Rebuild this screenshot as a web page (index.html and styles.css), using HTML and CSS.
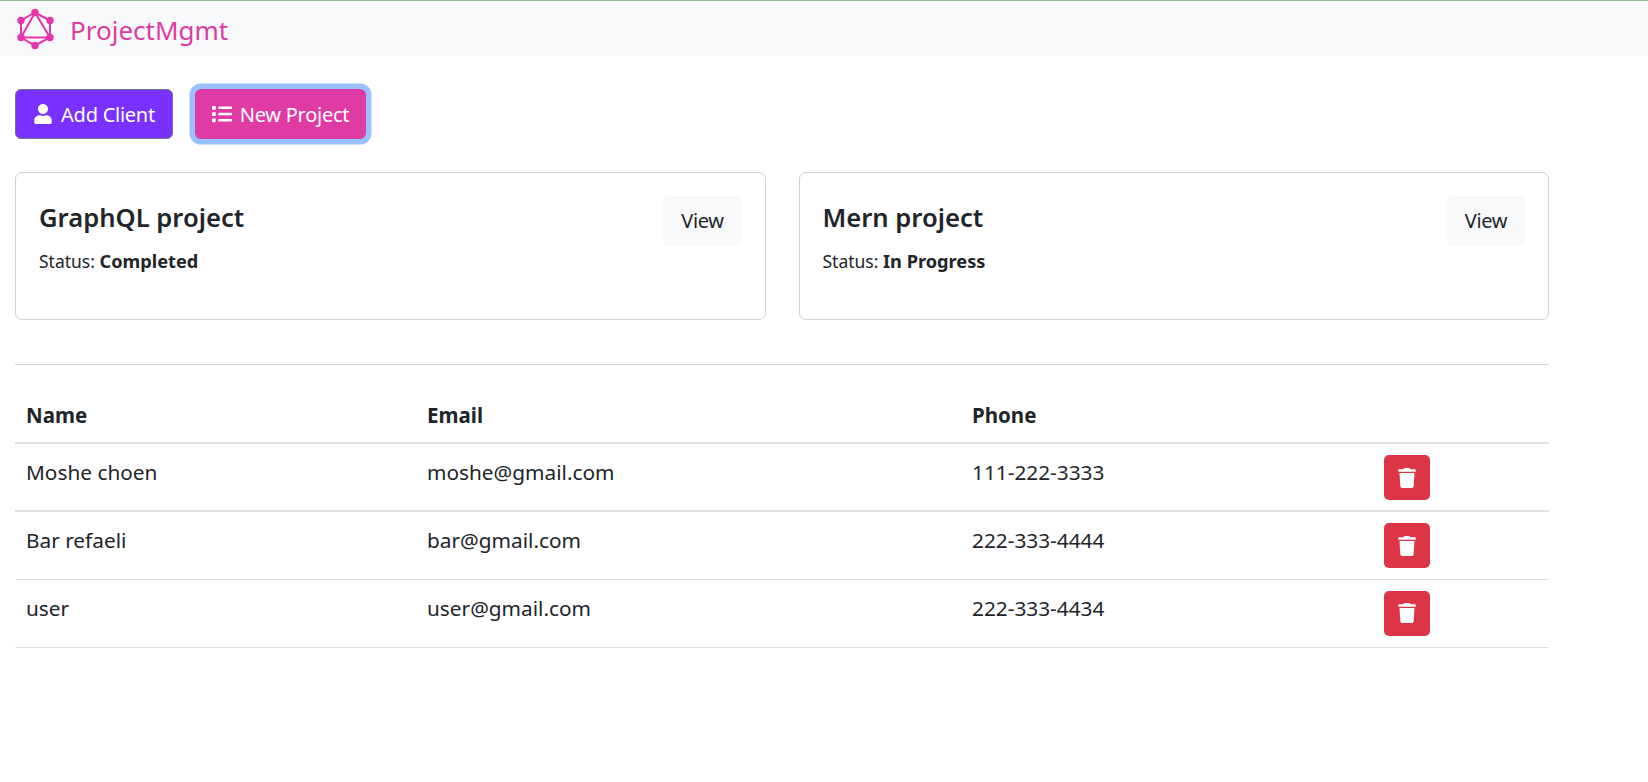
FILE: index.html
```html
<!doctype html>
<html lang="en">
  <head>
    <meta charset="UTF-8" />
    <title>ProjectMgmt</title>
    <link rel="stylesheet" href="styles.css">
  </head>
  <body>
    <nav class="navbar">
      <svg class="logo" viewBox="0 0 44 48">
        <g stroke="#e535ab" stroke-width="2" fill="none">
          <polygon points="22,7.5 37,15.5 37,32.5 22,40.5 8,32.5 8,15.5" />
          <polygon points="22,7.5 37,32.5 8,32.5" />
        </g>
        <g fill="#e535ab">
          <circle cx="22" cy="7.5" r="3.7" />
          <circle cx="37" cy="15.5" r="3.7" />
          <circle cx="37" cy="32.5" r="3.7" />
          <circle cx="22" cy="40.5" r="3.7" />
          <circle cx="8" cy="32.5" r="3.7" />
          <circle cx="8" cy="15.5" r="3.7" />
        </g>
      </svg>
      <span class="brand">ProjectMgmt</span>
    </nav>

    <main class="container">
      <div class="actions">
        <button class="btn btn-client">
          <svg class="icon" viewBox="0 0 448 512"><path d="M224 256c70.7 0 128-57.3 128-128S294.7 0 224 0 96 57.3 96 128s57.3 128 128 128zm89.6 32h-16.7c-22.2 10.2-46.9 16-72.9 16s-50.6-5.8-72.9-16h-16.7C60.2 288 0 348.2 0 422.4V464c0 26.5 21.5 48 48 48h352c26.5 0 48-21.5 48-48v-41.6c0-74.2-60.2-134.4-134.4-134.4z" /></svg>
          Add Client
        </button>
        <button class="btn btn-project">
          <svg class="icon" viewBox="0 0 512 512"><path d="M80 368H16a16 16 0 0 0-16 16v64a16 16 0 0 0 16 16h64a16 16 0 0 0 16-16v-64a16 16 0 0 0-16-16zm0-320H16A16 16 0 0 0 0 64v64a16 16 0 0 0 16 16h64a16 16 0 0 0 16-16V64a16 16 0 0 0-16-16zm0 160H16a16 16 0 0 0-16 16v64a16 16 0 0 0 16 16h64a16 16 0 0 0 16-16v-64a16 16 0 0 0-16-16zm416 176H176a16 16 0 0 0-16 16v32a16 16 0 0 0 16 16h320a16 16 0 0 0 16-16v-32a16 16 0 0 0-16-16zm0-320H176a16 16 0 0 0-16 16v32a16 16 0 0 0 16 16h320a16 16 0 0 0 16-16V80a16 16 0 0 0-16-16zm0 160H176a16 16 0 0 0-16 16v32a16 16 0 0 0 16 16h320a16 16 0 0 0 16-16v-32a16 16 0 0 0-16-16z" /></svg>
          New Project
        </button>
      </div>

      <div class="projects">
        <div class="card">
          <div class="card-head">
            <h5 class="card-title">GraphQL project</h5>
            <a class="btn-view">View</a>
          </div>
          <p class="status">Status: <strong>Completed</strong></p>
        </div>
        <div class="card">
          <div class="card-head">
            <h5 class="card-title">Mern project</h5>
            <a class="btn-view">View</a>
          </div>
          <p class="status">Status: <strong>In Progress</strong></p>
        </div>
      </div>

      <hr class="divider" />

      <table class="clients">
        <thead>
          <tr>
            <th class="col-name">Name</th>
            <th class="col-email">Email</th>
            <th class="col-phone">Phone</th>
            <th></th>
          </tr>
        </thead>
        <tbody>
          <tr>
            <td>Moshe choen</td>
            <td>moshe@gmail.com</td>
            <td>111-222-3333</td>
            <td><button class="btn-delete"><svg class="icon" viewBox="0 0 448 512"><path d="M432 32H312l-9.4-18.7A24 24 0 0 0 281.1 0H166.8a23.72 23.72 0 0 0-21.4 13.3L136 32H16A16 16 0 0 0 0 48v32a16 16 0 0 0 16 16h416a16 16 0 0 0 16-16V48a16 16 0 0 0-16-16zM53.2 467a48 48 0 0 0 47.9 45h245.8a48 48 0 0 0 47.9-45L416 128H32z" /></svg></button></td>
          </tr>
          <tr>
            <td>Bar refaeli</td>
            <td>bar@gmail.com</td>
            <td>222-333-4444</td>
            <td><button class="btn-delete"><svg class="icon" viewBox="0 0 448 512"><path d="M432 32H312l-9.4-18.7A24 24 0 0 0 281.1 0H166.8a23.72 23.72 0 0 0-21.4 13.3L136 32H16A16 16 0 0 0 0 48v32a16 16 0 0 0 16 16h416a16 16 0 0 0 16-16V48a16 16 0 0 0-16-16zM53.2 467a48 48 0 0 0 47.9 45h245.8a48 48 0 0 0 47.9-45L416 128H32z" /></svg></button></td>
          </tr>
          <tr>
            <td>user</td>
            <td>user@gmail.com</td>
            <td>222-333-4434</td>
            <td><button class="btn-delete"><svg class="icon" viewBox="0 0 448 512"><path d="M432 32H312l-9.4-18.7A24 24 0 0 0 281.1 0H166.8a23.72 23.72 0 0 0-21.4 13.3L136 32H16A16 16 0 0 0 0 48v32a16 16 0 0 0 16 16h416a16 16 0 0 0 16-16V48a16 16 0 0 0-16-16zM53.2 467a48 48 0 0 0 47.9 45h245.8a48 48 0 0 0 47.9-45L416 128H32z" /></svg></button></td>
          </tr>
        </tbody>
      </table>
    </main>
  </body>
</html>
```

FILE: styles.css
```css
* {
  box-sizing: border-box;
}
body {
  font-family: "Noto Sans", Arial, sans-serif;
  font-size: 20px;
  color: #212529;
  background-color: #fff;
  margin: 0;
}
.navbar {
  display: flex;
  align-items: center;
  height: 56px;
  padding-left: 13px;
  background-color: #f8f9fa;
  border-top: 1px solid #9db89d;
}
.logo {
  width: 44px;
  height: 48px;
}
.brand {
  margin-left: 13px;
  padding-top: 2px;
  font-size: 26px;
  color: #e03aa5;
}
.container {
  width: 1534px;
  margin-left: 15px;
  padding-top: 33px;
}
.actions {
  display: flex;
  gap: 22px;
}
.btn {
  display: flex;
  align-items: center;
  justify-content: center;
  gap: 8px;
  height: 50px;
  padding: 0;
  font: inherit;
  letter-spacing: -0.25px;
  color: #fff;
  border: 1px solid transparent;
  border-radius: 6px;
}
.icon {
  width: 20px;
  height: 20px;
  fill: #fff;
}
.btn-client {
  width: 158px;
  background-color: #7a30ff;
  border-color: #6c757d;
}
.btn-project {
  width: 171px;
  background-color: #e03aa5;
  box-shadow: 0 0 0 5.5px #98c1fe;
}
.projects {
  display: grid;
  grid-template-columns: 1fr 1fr;
  gap: 33px;
  margin-top: 33px;
}
.card {
  height: 148px;
  padding: 23px;
  border: 1px solid #d2d3d4;
  border-radius: 7px;
}
.card-head {
  display: flex;
  justify-content: space-between;
}
.card-title {
  margin: 0;
  font-size: 25.6px;
  font-weight: 600;
  line-height: 43px;
}
.btn-view {
  display: block;
  padding: 10px 18px;
  line-height: 30px;
  letter-spacing: -0.4px;
  background-color: #f8f9fa;
  border-radius: 6px;
}
.status {
  margin: 3px 0 0;
  font-size: 17.5px;
  line-height: 24px;
}
.status strong {
  font-size: 18.2px;
}
.divider {
  height: 1px;
  margin: 44px 0 0;
  background-color: #d2d3d4;
  border: none;
}
.clients {
  width: 100%;
  margin-top: 22px;
  border-collapse: collapse;
  table-layout: fixed;
}
.clients th,
.clients td {
  padding: 11px 11px 0;
  text-align: left;
  vertical-align: top;
  border-bottom: 1px solid #dee2e6;
}
.clients th {
  padding: 13px 11px 12px;
  font-size: 20.5px;
  font-weight: 700;
  line-height: 30px;
  border-bottom-width: 2px;
}
.clients td {
  height: 68px;
  font-size: 20.8px;
  line-height: 34px;
}
.clients tbody tr:first-child td {
  border-bottom-width: 2px;
}
.col-name {
  width: 401px;
}
.col-email {
  width: 545px;
}
.col-phone {
  width: 412px;
}
.btn-delete {
  display: flex;
  align-items: center;
  justify-content: center;
  width: 46px;
  height: 45px;
  background-color: #dc3545;
  border: none;
  border-radius: 5px;
}
```
